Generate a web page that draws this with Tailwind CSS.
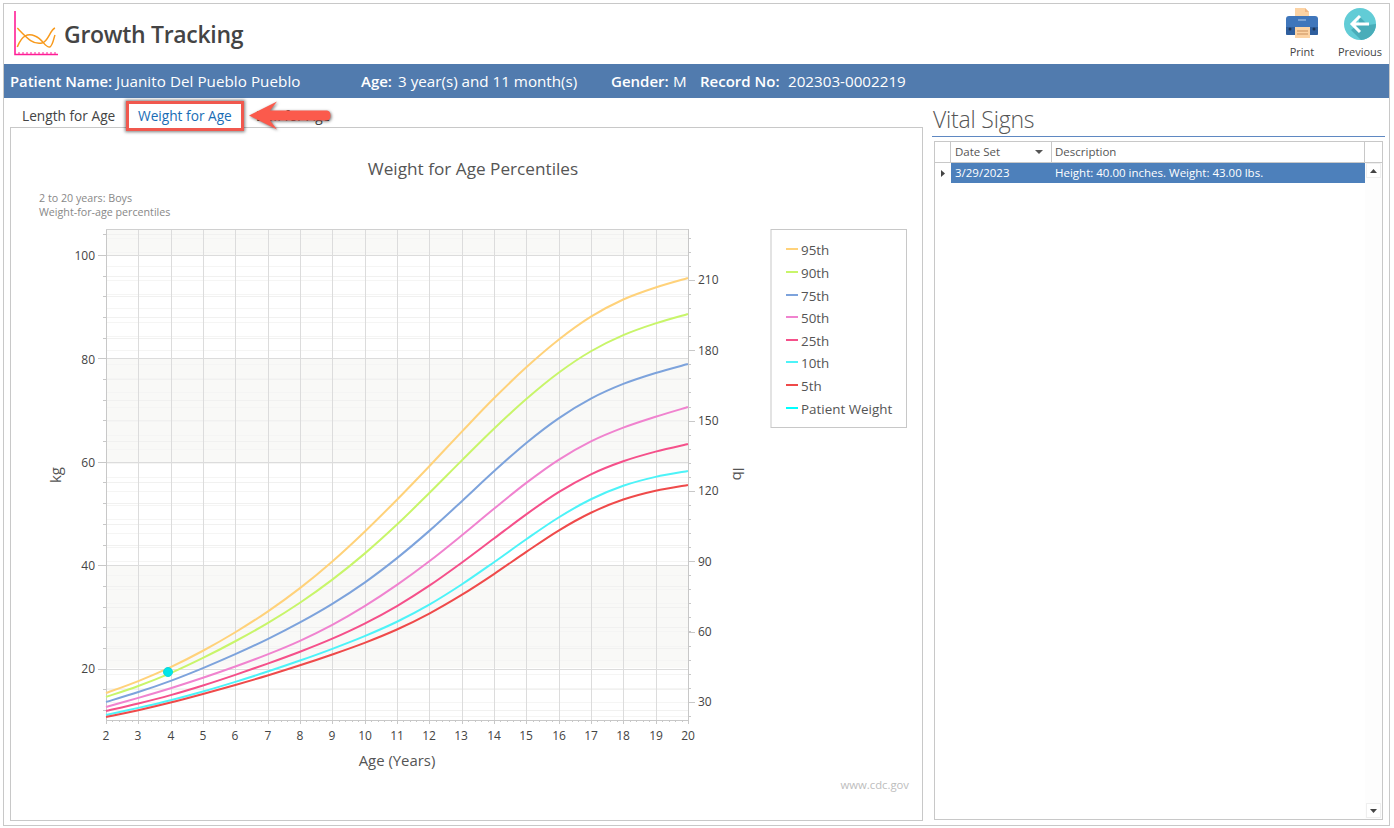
<!DOCTYPE html>
<html>
<head>
<meta charset="utf-8">
<title>Growth Tracking</title>
<script src="https://cdn.jsdelivr.net/npm/@tailwindcss/browser@4"></script>
</head>
<body class="bg-white font-['Open_Sans',sans-serif] text-[#444]">
<div class="w-[1394px] h-[828px] p-[3px] overflow-hidden relative">
  <div class="w-[1387px] h-[823px] border border-[#c8c8c8] flex flex-col">
    <header class="h-[60px] flex items-start justify-between shrink-0">
      <div class="flex items-center pl-[6px] pt-[5px]">
        <svg width="48" height="48" viewBox="10 9 48 48" fill="none">
          <path d="M15 11V54.500H58" stroke="#ff1e96" stroke-width="1.600"/>
          <path d="M19 55V52M23 55V52M27 55V52M31 55V52M35 55V52M39 55V52M43 55V52M47 55V52M51 55V52M55 55V52" stroke="#ff1e96" stroke-width="1"/>
          <path d="M17.300 28C27 38 33 45 42 43C48 42 50 30 55 28" stroke="#f89a1c" stroke-width="1.500"/>
          <path d="M17.300 47C22 35 28 33 35 36C43 39 45 48 50 47C53 45 54 37 55 35" stroke="#f89a1c" stroke-width="1.500"/>
        </svg>
        <h1 class="ml-[6px] text-[23px] leading-none font-semibold text-[#444] mt-[2px] tracking-[-0.3px]">Growth Tracking</h1>
      </div>
      <div class="flex pr-0 pt-[4px] text-[11px] text-[#444]">
        <div class="w-[58px] flex flex-col items-center">
          <svg width="34" height="32" viewBox="0 0 34 32">
            <path d="M10 0H20L24 4V12H10Z" fill="#fcd3a4"/>
            <path d="M20 0L24 4H20Z" fill="#f1b783"/>
            <path d="M4 8H30Q33 8 33 11V26Q33 27 31 27H3Q1 27 1 26V11Q1 8 4 8Z" fill="#3f76bb"/>
            <path d="M1 19H33V26Q33 27 31 27H3Q1 27 1 26Z" fill="#2f5f9e"/>
            <path d="M13 12H21" stroke="#8db1dd" stroke-width="1.500"/>
            <circle cx="5" cy="21" r="1.500" fill="#1d3556"/><circle cx="29" cy="21" r="1.500" fill="#1d3556"/>
            <rect x="10" y="19" width="15" height="11" fill="#fcd3a4"/>
            <path d="M12 23H23M12 26H23" stroke="#c98f5d" stroke-width="1"/>
          </svg>
          <span class="mt-[6px] leading-none">Print</span>
        </div>
        <div class="w-[58px] flex flex-col items-center">
          <svg width="32" height="32" viewBox="0 0 32 32">
            <circle cx="16" cy="16" r="16" fill="#62ccd6"/>
            <path d="M15 8L24 17L32 16A16 16 0 0 1 17 32L7 22L15 16Z" fill="#49adb9"/>
            <path d="M16 8L8 16L16 24M8.500 16H25" fill="none" stroke="#fff" stroke-width="3"/>
          </svg>
          <span class="mt-[6px] leading-none">Previous</span>
        </div>
      </div>
    </header>
    <div class="h-[34px] bg-[#517bae] text-white text-[15.200px] flex items-center pl-[6px] pt-[1px] shrink-0">
      <span class="font-semibold text-[14.800px] w-[106px]">Patient Name:</span><span class="w-[245px] tracking-[0.05px]">Juanito Del Pueblo Pueblo</span>
      <span class="font-semibold text-[15px] w-[37px]">Age:</span><span class="w-[213px]">3 year(s) and 11 month(s)</span>
      <span class="font-semibold text-[15px] w-[62px]">Gender:</span><span class="w-[27px]">M</span>
      <span class="font-semibold text-[15px] w-[88px]">Record No:</span><span>202303-0002219</span>
    </div>
    <main class="flex-1 flex min-h-0">
      <section class="w-[928px] pl-[6px] flex flex-col shrink-0">
        <nav class="h-[30px] flex items-stretch text-[13.700px] border-b border-[#c8c8c8] w-[913px] shrink-0">
          <span class="pl-[12px] w-[116px] pt-[8px]">Length for Age</span>
          <span class="text-[#1a6db5] w-[116px] pl-[12px] pt-[8px] h-[30px] bg-white relative">Weight for Age</span>
          <span class="pl-[14px] pt-[8px]">BMI for Age</span>
        </nav>
        <div class="w-[913px] h-[693px] border border-t-0 border-[#c8c8c8]">
          <svg id="chart" width="911" height="692" viewBox="11 128 911 692" class="block">
            <text x="473" y="175" text-anchor="middle" font-size="17.200" fill="#555">Weight for Age Percentiles</text>
            <text x="39" y="202" font-size="10.700" fill="#888">2 to 20 years: Boys</text>
            <text x="39" y="216" font-size="10.700" fill="#888">Weight-for-age percentiles</text>
            <g id="grid"></g>
            <g id="curves" fill="none" stroke-width="2"></g>
            <circle cx="168" cy="672" r="4.500" fill="#00e6e8" stroke="#12d5dd" stroke-width="1"/>
            <g font-size="12" fill="#444" text-anchor="end">
              <text x="95" y="260">100</text><text x="95" y="364">80</text><text x="95" y="467">60</text><text x="95" y="570">40</text><text x="95" y="673">20</text>
            </g>
            <g font-size="12" fill="#444">
              <text x="698" y="284">210</text><text x="698" y="355">180</text><text x="698" y="425">150</text><text x="698" y="495">120</text><text x="698" y="566">90</text><text x="698" y="636">60</text><text x="698" y="706">30</text>
            </g>
            <g font-size="12" fill="#444" text-anchor="middle">
              <text x="106" y="740">2</text><text x="138" y="740">3</text><text x="171" y="740">4</text><text x="203" y="740">5</text><text x="235" y="740">6</text><text x="268" y="740">7</text><text x="300" y="740">8</text><text x="332" y="740">9</text><text x="365" y="740">10</text><text x="397" y="740">11</text><text x="429" y="740">12</text><text x="461" y="740">13</text><text x="494" y="740">14</text><text x="526" y="740">15</text><text x="559" y="740">16</text><text x="591" y="740">17</text><text x="623" y="740">18</text><text x="656" y="740">19</text><text x="688" y="740">20</text>
            </g>
            <text x="397" y="766" text-anchor="middle" font-size="14.900" fill="#555">Age (Years)</text>
            <text transform="translate(61 475) rotate(-90)" text-anchor="middle" font-size="15" fill="#555">kg</text>
            <text transform="translate(733 474) rotate(90)" text-anchor="middle" font-size="15" fill="#555">lb</text>
            <rect x="771" y="229.500" width="135.500" height="198" fill="#fff" stroke="#c8c8c8"/>
            <g stroke-width="2">
              <path d="M786 249H798" stroke="#ffd27a"/><path d="M786 272H798" stroke="#c8f56a"/><path d="M786 295H798" stroke="#7da3dc"/><path d="M786 317H798" stroke="#f083cf"/><path d="M786 340H798" stroke="#f5508a"/><path d="M786 362H798" stroke="#4df3f8"/><path d="M786 385H798" stroke="#ef4a4a"/><path d="M786 408H798" stroke="#00ffff"/>
            </g>
            <g font-size="13.400" fill="#555">
              <text x="801" y="255">95th</text><text x="801" y="278">90th</text><text x="801" y="301">75th</text><text x="801" y="323">50th</text><text x="801" y="346">25th</text><text x="801" y="368">10th</text><text x="801" y="391">5th</text><text x="801" y="414">Patient Weight</text>
            </g>
            <text x="909" y="789" text-anchor="end" font-size="11.300" fill="#bdbdbd">www.cdc.gov</text>
          </svg>
        </div>
      </section>
      <aside class="flex-1 min-w-0 flex flex-col pr-[4px]">
        <h2 class="text-[23px] leading-none font-light text-[#555] pl-[1px] pt-[10px] h-[39px] border-b border-[#5f88c2] tracking-[-0.2px] shrink-0">Vital Signs</h2>
        <div class="ml-[2px] mr-[2px] mt-[4px] h-[679px] border border-[#c8c8c8] flex flex-col text-[11.500px]">
          <div class="h-[21px] flex border-b border-[#c8c8c8] shrink-0 text-[#555]">
            <div class="w-[16px] border-r border-[#c8c8c8]"></div>
            <div class="w-[101px] border-r border-[#c8c8c8] flex items-center justify-between pl-[4px] pr-[8px]">Date Set<svg width="8" height="4" viewBox="0 0 8 4"><path d="M0 0H8L4 4Z" fill="#555"/></svg></div>
            <div class="flex-1 border-r border-[#c8c8c8] flex items-center pl-[3px]">Description</div>
            <div class="w-[17px]"></div>
          </div>
          <div class="flex-1 flex min-h-0">
            <div class="w-[16px] shrink-0 h-[20px] flex items-center justify-center"><svg width="4" height="7" viewBox="0 0 4 7"><path d="M0 0L4 3.500L0 7Z" fill="#444"/></svg></div>
            <div class="flex-1 h-[20px] bg-[#4d80bb] text-white flex items-center">
              <span class="w-[100px] pl-[4px]">3/29/2023</span><span class="pl-[4px]">Height: 40.00 inches. Weight: 43.00 lbs.</span>
            </div>
            <div class="w-[17px] shrink-0 flex flex-col justify-between pb-[1px] pl-[1px] bg-[#fdfdfd]">
              <div class="h-[15px] w-[15px] border border-[#efefef] bg-white flex items-center justify-center"><svg width="7" height="4" viewBox="0 0 7 4"><path d="M0 4H7L3.500 0Z" fill="#444"/></svg></div>
              <div class="h-[15px] w-[15px] border border-[#efefef] bg-white flex items-center justify-center"><svg width="7" height="4" viewBox="0 0 7 4"><path d="M0 0H7L3.500 4Z" fill="#444"/></svg></div>
            </div>
          </div>
        </div>
      </aside>
    </main>
  </div>
  <div class="absolute left-[126px] top-[101px] w-[118px] h-[30px] border-[3px] border-[#f0584e] shadow-[0_0_3px_1px_rgba(0,0,0,0.5)]"></div>
  <svg class="absolute left-[246px] top-[98px]" width="90" height="36" viewBox="246 98 90 36">
    <path d="M249 115.500L277 101.500L270 110.500H327Q330.500 111 330.500 115.500Q330.500 120 327 120.500H270L277 129.500Z" fill="#fb5a4c" style="filter:drop-shadow(1px 1.500px 1.500px rgba(0,0,0,.55))"/>
  </svg>
</div>
<script>
const NS='http://www.w3.org/2000/svg';
const grid=document.getElementById('grid'),curves=document.getElementById('curves');
const add=(p,t,a)=>{const e=document.createElementNS(NS,t);for(const k in a)e.setAttribute(k,a[k]);p.appendChild(e);return e};
const L=106,R=688,T=229,B=720;
const hl=(y,x1,x2,c)=>add(grid,'rect',{x:x1,y:Math.round(y),width:x2-x1,height:1,fill:c});
add(grid,'rect',{x:L,y:T,width:R-L,height:B-T,fill:'#fff'});
[[229,26],[359,103],[565,103]].forEach(([y,h])=>add(grid,'rect',{x:L,y,width:R-L,height:h,fill:'#f9f9f7'}));
for(let y=280-14.06*3;y<B;y+=14.06){hl(y,L,R,'#f5f5f4');hl(y,R,R+3,'#c8c8c8')}
for(let y=255-20.68;y<B;y+=20.68){hl(y,L,R,'#f1f1f0');hl(y,L-3,L,'#c8c8c8')}
for(let y=255;y<B;y+=103.4){hl(y,L,R,'#dcdcdc');hl(y,L-8,L,'#c8c8c8')}
for(let y=280;y<B;y+=70.3){hl(y,R,R+7,'#c8c8c8')}
for(let i=0;i<=18;i++){const x=Math.round(L+i*32.33);add(grid,'rect',{x,y:T,width:1,height:B-T,fill:(i==0||i==18)?'#c8c8c8':'#dcdcdc'})}
for(let i=0;i<=90;i++){const x=Math.round(L+i*6.467);add(grid,'rect',{x,y:B,width:1,height:i%5?2:4,fill:'#c8c8c8'})}
add(grid,'rect',{x:L,y:T,width:R-L,height:1,fill:'#d0d0d0'});
add(grid,'rect',{x:L,y:B,width:R-L+1,height:1,fill:'#c8c8c8'});
const data=[
['#ffd27a',[693,683,668,652,633,613,590,563,533,500,467,432,396,366,338,313,296,287,278]],
['#c8f56a',[697,687,675,658,642,624,605,580,556,526,493,461,427,398,370,348,333,322,314]],
['#7da3dc',[702,693,682,668,655,640,623,605,585,559,532,503,469,442,415,396,382,372,364]],
['#f083cf',[707,698,689,678,667,655,642,627,607,586,563,536,508,482,457,438,427,416,407]],
['#f5508a',[711,704,696,686,675,664,652,640,625,607,588,563,538,515,488,472,460,450,444]],
['#4df3f8',[715,708,701,692,682,672,661,649,637,623,607,585,563,539,515,497,483,475,471]],
['#ef4a4a',[717,711,703,694,685,676,666,654,644,631,615,596,575,552,528,510,498,488,485]]];
const smooth=a=>a.map((v,i)=>(i==0||i==a.length-1)?v:(a[i-1]+2*v+a[i+1])/4);
data.forEach(([c,raw])=>{
  const ys=smooth(smooth(raw));
  const P=ys.map((y,i)=>[L+i*32.33,y]);let d='M'+P[0];
  for(let i=0;i<P.length-1;i++){const a=P[Math.max(i-1,0)],b=P[i],e=P[i+1],f=P[Math.min(i+2,P.length-1)];
    d+='C'+[b[0]+(e[0]-a[0])/6,b[1]+(e[1]-a[1])/6,e[0]-(f[0]-b[0])/6,e[1]-(f[1]-b[1])/6,e[0],e[1]].join(' ')}
  add(curves,'path',{d,stroke:c});
});
</script>
</body>
</html>
